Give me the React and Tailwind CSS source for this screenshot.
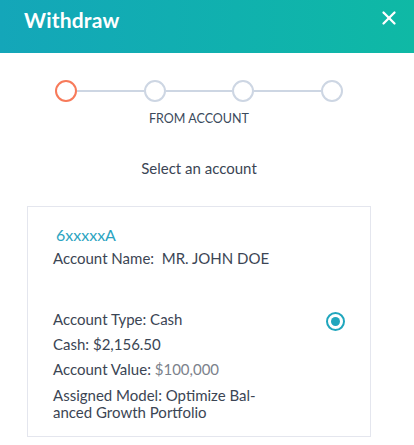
import { X } from 'lucide-react';

const Step = ({ active }) => (
  <div
    className={`w-[22px] h-[22px] rounded-full border-2 bg-white shrink-0 ${
      active ? 'border-[#f77a5a]' : 'border-[#cdd6e3]'
    }`}
  />
);

const App = () => {
  return (
    <div className="w-[414px] h-[445px] bg-white overflow-hidden font-['Lato',sans-serif] text-[#3b4554]">
      {/* Header */}
      <div className="h-[53px] flex items-center justify-between pl-6 pr-[14px] bg-gradient-to-r from-[#14a6b9] to-[#0fb9a5]">
        <h1 className="text-white text-[21px] font-bold tracking-[0.2px] -mt-[14px]">Withdraw</h1>
        <X className="text-white w-[22px] h-[22px] -mt-[17px]" strokeWidth={2.5} />
      </div>

      {/* Stepper */}
      <div className="ml-[27px] w-[344px] flex flex-col items-center mt-[27px]">
        <div className="flex items-center">
          <Step active />
          <div className="w-[67px] h-[2px] bg-[#cdd6e3]" />
          <Step />
          <div className="w-[66px] h-[2px] bg-[#cdd6e3]" />
          <Step />
          <div className="w-[67px] h-[2px] bg-[#cdd6e3]" />
          <Step />
        </div>
        <p className="text-[12.5px] mt-[8px] text-[#3b4a5c]">FROM ACCOUNT</p>
        <p className="text-[15px] mt-[28px]">Select an account</p>
      </div>

      {/* Account card */}
      <div className="ml-[27px] w-[344px] mt-[27px] h-[231px] border border-[#e4e6ee] pl-[25px] pr-[24px] pt-[18px]">
        <p className="text-[#2ba4c1] text-[16px] pl-[3px] leading-[20px]">6xxxxxA</p>
        <p className="text-[15px] leading-[20px] mt-[3px]">
          Account Name:&nbsp;&nbsp;MR. JOHN DOE
        </p>
        <div className="flex justify-between mt-[41px]">
          <div className="flex flex-col gap-[5px] text-[15px] leading-[20px] w-[210px]">
            <p>Account Type: Cash</p>
            <p>Cash: $2,156.50</p>
            <p>
              Account Value: <span className="text-[#7c828c]">$100,000</span>
            </p>
            <p className="leading-[17px] mt-[3px]">
              Assigned Model: Optimize Bal-anced Growth Portfolio
            </p>
          </div>
          <div className="w-[19px] h-[19px] rounded-full border-2 border-[#1fa6bd] flex items-center justify-center mt-[3px] mr-[1px]">
            <div className="w-[9px] h-[9px] rounded-full bg-[#1fa6bd]" />
          </div>
        </div>
      </div>
    </div>
  );
};

export default App;
